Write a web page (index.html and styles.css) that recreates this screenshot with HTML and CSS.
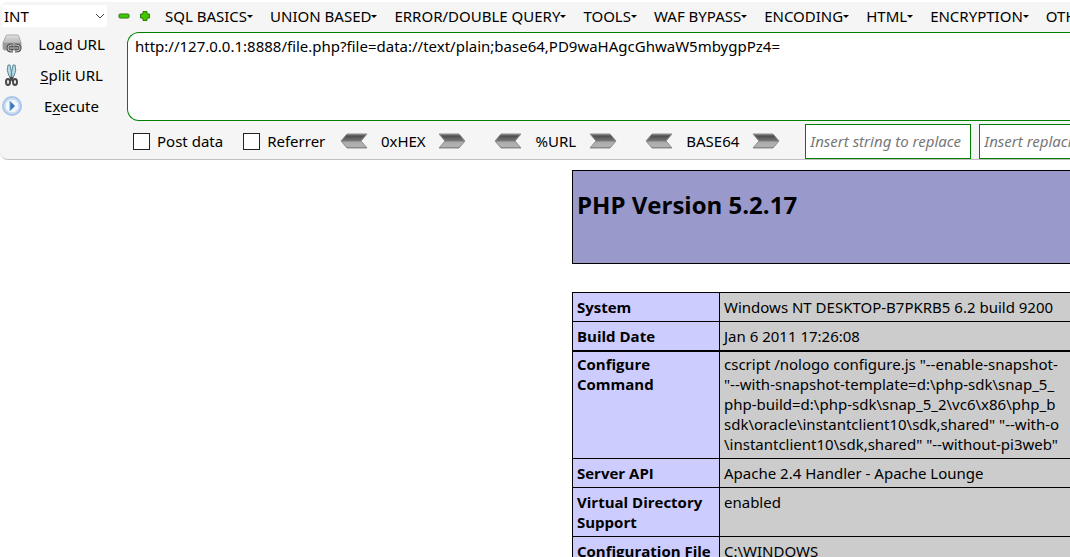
FILE: index.html
```html
<!DOCTYPE html>
<html lang="en">
<head>
<meta charset="utf-8">
<title>phpinfo()</title>
<link rel="stylesheet" href="styles.css">
</head>
<body>
<svg class="defs" aria-hidden="true">
  <defs>
    <linearGradient id="steel" x1="0" y1="0" x2="0" y2="1">
      <stop offset="0" stop-color="#8a8a8a"/><stop offset=".15" stop-color="#4e4e4e"/><stop offset=".5" stop-color="#777"/><stop offset=".56" stop-color="#aaa"/><stop offset=".88" stop-color="#b4b4b4"/><stop offset="1" stop-color="#777"/>
    </linearGradient>
    <linearGradient id="metal" x1="0" y1="0" x2="0" y2="1">
      <stop offset="0" stop-color="#e4e4e4"/><stop offset="1" stop-color="#858585"/>
    </linearGradient>
    <symbol id="arrow" viewBox="0 0 28 16"><path d="M7 1H27L21 8L27 15H7L1 8Z" fill="url(#steel)" stroke="#8b8b8b" stroke-width="1"/></symbol>
  </defs>
</svg>
<header class="hackbar">
  <div class="topline">
    <select class="kind" aria-label="Type"><option>INT</option></select>
    <button class="mini" aria-label="Decrease"><svg width="12" height="12" viewBox="0 0 12 12"><rect x="1" y="4" width="10" height="4" rx="1" fill="#43c800" stroke="#297d0c"/></svg></button>
    <button class="mini" aria-label="Increase"><svg width="12" height="12" viewBox="0 0 12 12"><path d="M4 1.5H8V4H10.500V8H8V10.500H4V8H1.500V4H4Z" fill="#43c800" stroke="#297d0c" stroke-linejoin="round"/></svg></button>
    <nav class="menu">
      <button>SQL BASICS</button>
      <button>UNION BASED</button>
      <button>ERROR/DOUBLE QUERY</button>
      <button>TOOLS</button>
      <button>WAF BYPASS</button>
      <button>ENCODING</button>
      <button>HTML</button>
      <button>ENCRYPTION</button>
      <button>OTHER</button>
    </nav>
  </div>
  <div class="work">
    <div class="actions">
      <button><svg width="20" height="20" viewBox="0 0 20 20"><path d="M4 2Q4 1 6 1H15Q17 1 17 3L19 9V14Q19 16 17 16H3Q1 16 1 14V9Z" fill="url(#metal)" stroke="#aaa"/><path d="M1 8H19V14Q19 16 17 16H3Q1 16 1 14Z" fill="#999"/><path d="M2 8H18" stroke="#ccc"/><path d="M11 11H9Q6 11 6 14T9 17H11M13 11H14Q18 11 18 14T14 17H13M9 14H15" fill="none" stroke="#555" stroke-width="3"/><path d="M11 11H9Q6 11 6 14T9 17H11M13 11H14Q18 11 18 14T14 17H13M9 14H15" fill="none" stroke="#c6c6c6"/></svg><span>Lo<u>a</u>d URL</span></button>
      <button><svg width="20" height="24" viewBox="0 0 20 24"><path d="M6 2Q4 7 7 13L9 15L10 12L8 2ZM13 2Q15 7 12 13L10 15L9 12L11 2Z" fill="#b9dbe5" stroke="#5d8897"/><path d="M8 14L11 18M11 14L8 18" stroke="#444" stroke-width="2"/><ellipse cx="6" cy="19" rx="2" ry="3" fill="#f5f5f5" stroke="#484848" stroke-width="2"/><ellipse cx="13" cy="19" rx="2" ry="3" fill="#f5f5f5" stroke="#484848" stroke-width="2"/></svg><span><u>S</u>plit URL</span></button>
      <button><svg width="20" height="20" viewBox="0 0 20 20"><circle cx="10" cy="10" r="9" fill="#d7e6f8" stroke="#a7c5ea" stroke-width="2"/><circle cx="10" cy="10" r="7" fill="#f4f8fd" stroke="#c1d6ee"/><path d="M8 5L13 10L8 15Z" fill="#3976bd"/><path d="M8 5V15" stroke="#79a8dc"/></svg><span>E<u>x</u>ecute</span></button>
    </div>
    <div class="request">
      <textarea class="url" aria-label="URL" spellcheck="false">http://127.0.0.1:8888/file.php?file=data://text/plain;base64,PD9waHAgcGhwaW5mbygpPz4=</textarea>
      <div class="options">
        <label class="check"><input type="checkbox">Post data</label>
        <label class="check"><input type="checkbox">Referrer</label>
        <div class="codec hex"><button aria-label="Decode hex"><svg width="28" height="16"><use href="#arrow"/></svg></button><span>0xHEX</span><button aria-label="Encode hex"><svg class="forward" width="28" height="16"><use href="#arrow"/></svg></button></div>
        <div class="codec percent"><button aria-label="Decode URL"><svg width="28" height="16"><use href="#arrow"/></svg></button><span>%URL</span><button aria-label="Encode URL"><svg class="forward" width="28" height="16"><use href="#arrow"/></svg></button></div>
        <div class="codec base"><button aria-label="Decode base64"><svg width="28" height="16"><use href="#arrow"/></svg></button><span>BASE64</span><button aria-label="Encode base64"><svg class="forward" width="28" height="16"><use href="#arrow"/></svg></button></div>
        <input class="swap" type="text" aria-label="String to replace" placeholder="Insert string to replace">
        <input class="swap" type="text" aria-label="Replacement" placeholder="Insert replacing string">
      </div>
    </div>
  </div>
</header>
<main class="page">
  <div class="banner"><h1>PHP Version 5.2.17</h1></div>
  <table class="info">
    <colgroup><col class="name"><col></colgroup>
    <tr><th scope="row">System</th><td>Windows NT DESKTOP-B7PKRB5 6.2 build 9200</td></tr>
    <tr><th scope="row">Build Date</th><td>Jan 6 2011 17:26:08</td></tr>
    <tr class="heavy"><th scope="row">Configure Command</th><td>cscript /nologo configure.js "--enable-snapshot-<br>"--with-snapshot-template=d:\php-sdk\snap_5_<br>php-build=d:\php-sdk\snap_5_2\vc6\x86\php_b<br>sdk\oracle\instantclient10\sdk,shared" "--with-o<br>\instantclient10\sdk,shared" "--without-pi3web"</td></tr>
    <tr><th scope="row">Server API</th><td>Apache 2.4 Handler - Apache Lounge</td></tr>
    <tr><th scope="row">Virtual Directory Support</th><td>enabled</td></tr>
    <tr><th scope="row">Configuration File (php.ini) Path</th><td>C:\WINDOWS</td></tr>
  </table>
</main>
</body>
</html>
```

FILE: styles.css
```css
* { box-sizing: border-box; }
body {
  margin: 0;
  height: 100vh;
  overflow: hidden;
  background: #fff;
  color: #000;
  font: 15px/20px "Noto Sans", "Open Sans", sans-serif;
}
button, input, select, textarea { font: inherit; color: inherit; }
button { padding: 0; border: 0; background: none; white-space: nowrap; }
svg { display: block; flex: none; }
.defs { position: absolute; width: 0; height: 0; }

.hackbar {
  margin-top: 2px;
  background: #f5f5f5;
  border-bottom: 1px solid #c0c0c0;
  border-radius: 8px 0 0 8px;
  overflow: hidden;
}
.topline { display: flex; align-items: center; height: 30px; padding: 0 0 2px 2px; }
.kind {
  appearance: none;
  flex: none;
  width: 105px;
  height: 22px;
  margin-right: 11px;
  padding: 0 2px;
  border: 0;
  border-radius: 0;
  background: #fff url("data:image/svg+xml,%3Csvg xmlns='http://www.w3.org/2000/svg' width='10' height='6'%3E%3Cpath d='M1 1L5 5L9 1' fill='none' stroke='%23444'/%3E%3C/svg%3E") no-repeat right 2px center;
}
.mini { flex: none; margin-right: 9px; }
.menu { display: flex; gap: 17px; padding-left: 5px; }
.menu button { display: flex; align-items: center; flex: none; }
.menu button::after { content: ""; border: 3px solid transparent; border-top-color: #000; border-bottom: 0; }

.work { display: grid; grid-template-columns: 127px minmax(0, 1fr); }
.actions { display: flex; flex-direction: column; padding-left: 2px; }
.actions button { display: flex; align-items: center; height: 31px; padding: 0 16px 7px 0; }
.actions span { flex: 1; padding: 0 4px 0 14px; text-align: center; }
.actions u { text-underline-offset: 2px; }

.url {
  display: block;
  width: 100%;
  height: 89px;
  padding: 3px 7px;
  border: 1px solid #008000;
  border-right: 0;
  border-radius: 12px 0 0 12px;
  background: #fff;
  resize: none;
  outline: 0;
}
.options { display: flex; align-items: center; height: 38px; padding: 2px 0 0 6px; }
.check { display: flex; align-items: center; gap: 7px; flex: none; margin-right: 20px; }
.check input { appearance: none; width: 17px; height: 17px; margin: 0; border: 1px solid #222; background: #fff; }
.check + .codec { margin-left: -5px; }
.codec { display: flex; align-items: center; justify-content: space-between; flex: none; margin-right: 28px; }
.codec.hex { width: 126px; }
.codec.percent { width: 123px; }
.codec.base { width: 135px; margin-right: 25px; }
.forward { transform: scaleX(-1); }
.swap { flex: none; width: 166px; height: 35px; margin-right: 8px; padding: 0 4px; border: 1px solid #008000; border-radius: 0; background: #fff; }
.swap::placeholder { color: #777; font-style: italic; opacity: 1; }

.page { padding: 10px 0 0 572px; }
.banner { height: 94px; padding: 18px 4px; border: 1px solid #000; border-right: 0; background: #9999cc; }
h1 { margin: 0; font: bold 24px/32px "Open Sans", sans-serif; white-space: nowrap; }
.info { width: 100%; margin-top: 28px; table-layout: fixed; border-collapse: collapse; }
.name { width: 147px; }
.info th, .info td { padding: 4px; border: 1px solid #000; vertical-align: top; text-align: left; }
.info th { background: #ccccff; font-family: "Open Sans", sans-serif; }
.info td { background: #cccccc; border-right: 0; white-space: nowrap; overflow: hidden; }
.info .heavy th, .info .heavy td { padding-top: 2px; border-top-width: 2px; }
```
